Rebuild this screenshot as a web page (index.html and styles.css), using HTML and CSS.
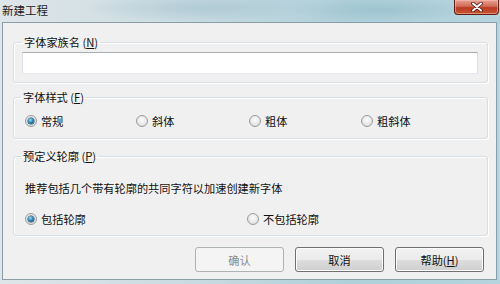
FILE: index.html
```html
<!DOCTYPE html>
<html lang="zh-CN">
<head>
<meta charset="utf-8">
<title>新建工程</title>
<link rel="stylesheet" href="styles.css">
</head>
<body>
<div class="window">
  <div class="titlebar">
    <span class="title">新建工程</span>
    <button class="close" aria-label="关闭">
      <svg width="12" height="10" viewBox="0 0 12 10">
        <path d="M2 1.5 L10 8.5 M10 1.5 L2 8.5" stroke="#4a1a14" stroke-width="3.6" stroke-linecap="round"/>
        <path d="M2 1.5 L10 8.5 M10 1.5 L2 8.5" stroke="#ffffff" stroke-width="2" stroke-linecap="round"/>
      </svg>
    </button>
  </div>
  <div class="client">
    <fieldset class="group g1">
      <legend>字体家族名 (<u>N</u>)</legend>
      <input class="textbox" type="text">
    </fieldset>
    <fieldset class="group g2">
      <legend>字体样式 (<u>F</u>)</legend>
      <div class="radios">
        <label class="opt"><span class="radio checked"></span>常规</label>
        <label class="opt"><span class="radio"></span>斜体</label>
        <label class="opt"><span class="radio"></span>粗体</label>
        <label class="opt"><span class="radio"></span>粗斜体</label>
      </div>
    </fieldset>
    <fieldset class="group g3">
      <legend>预定义轮廓 (<u>P</u>)</legend>
      <p class="desc">推荐包括几个带有轮廓的共同字符以加速创建新字体</p>
      <div class="radios">
        <label class="opt"><span class="radio checked"></span>包括轮廓</label>
        <span></span>
        <label class="opt"><span class="radio"></span>不包括轮廓</label>
      </div>
    </fieldset>
    <div class="buttons">
      <button class="btn" disabled>确认</button>
      <button class="btn">取消</button>
      <button class="btn">帮助(<u>H</u>)</button>
    </div>
  </div>
</div>
</body>
</html>
```
FILE: styles.css
```css
* { box-sizing: border-box; }
html, body {
  margin: 0;
  padding: 0;
  width: 500px;
  height: 284px;
  overflow: hidden;
}
body {
  font-family: "Noto Sans CJK SC", "Noto Sans", sans-serif;
  font-size: 11.2px;
  color: #111;
}
.window {
  width: 500px;
  height: 284px;
  display: flex;
  flex-direction: column;
  background:
    radial-gradient(ellipse 120px 14px at 200px 8px, rgba(150,185,200,0.45), transparent),
    radial-gradient(ellipse 90px 12px at 380px 10px, rgba(140,185,200,0.5), transparent),
    linear-gradient(90deg, #dfe6e9 0%, #cbdce2 35%, #afcfd9 70%, #b5d4de 100%);
}
.titlebar {
  height: 22px;
  flex: none;
  display: flex;
  align-items: flex-start;
  justify-content: space-between;
  padding-left: 2px;
  padding-right: 1px;
}
.title {
  font-size: 11.5px;
  line-height: 20px;
  color: #1b1b1b;
}
.close {
  width: 45px;
  height: 15px;
  margin: 0;
  padding: 0;
  border: 1px solid #5e1f17;
  border-top: none;
  border-radius: 0 0 4px 4px;
  background: linear-gradient(#e8a093 0%, #d26a55 45%, #b93a22 55%, #c9552f 100%);
  box-shadow: inset 0 0 0 1px rgba(255,200,190,0.5);
  display: flex;
  align-items: center;
  justify-content: center;
}
.close svg { display: block; }
.client {
  height: 258px;
  margin: 0 3px 0 2px;
  border: 1px solid #8a9ea8;
  background: #f0f0f0;
  display: flex;
  flex-direction: column;
  padding: 0 0 6px 0;
}
.group {
  margin: 0 8px 0 10px;
  padding: 0 11px 0 11px;
  border: 1px solid #d5dfe5;
  border-radius: 3px;
  box-shadow: inset 1px 1px 0 #fff, 1px 1px 0 #fff;
  min-width: 0;
}
.group legend {
  padding: 0 2px;
  margin-left: -4px;
  line-height: 16px;
  font-size: 11.2px;
}
.g1 { margin-top: 11px; padding-top: 2px; padding-bottom: 8px; padding-left: 8px; padding-right: 9px; }
.g2 { margin-top: 6px; padding-top: 8px; padding-bottom: 9px; }
.g3 { margin-top: 9px; padding-top: 16px; padding-bottom: 8px; }
.g1 legend { margin-left: 0; }
.textbox {
  display: block;
  width: 100%;
  height: 22px;
  margin: 0;
  border: 1px solid;
  border-color: #abadb3 #dbdfe6 #e3e9ef #e2e3ea;
  background: #fff;
  font: inherit;
  outline: none;
}
.radios {
  display: grid;
  grid-template-columns: 111px 113px 112px 1fr;
  height: 16px;
  align-items: center;
}
.g3 .radios { grid-template-columns: 111px 111px 1fr; }
.opt {
  display: flex;
  align-items: center;
  line-height: 16px;
  white-space: nowrap;
}
.radio {
  width: 12px;
  height: 12px;
  border-radius: 50%;
  border: 1px solid #9a9c9e;
  background: radial-gradient(circle at 50% 40%, #fdfdfd 0%, #e6e6e6 60%, #d2d2d2 100%);
  margin-right: 4px;
  position: relative;
  flex: none;
}
.radio.checked::after {
  content: "";
  position: absolute;
  left: 2px;
  top: 2px;
  width: 6px;
  height: 6px;
  border-radius: 50%;
  background: radial-gradient(circle at 40% 35%, #9fe3f7 0%, #2b86b8 45%, #0d3f66 100%);
  box-shadow: 0 0 0 0.5px #183c5a;
}
.desc {
  margin: 0 0 15px 0;
  line-height: 16px;
  white-space: nowrap;
}
.buttons {
  margin-top: 11px;
  display: flex;
  justify-content: flex-end;
  gap: 11px;
  padding-right: 12px;
}
.btn {
  width: 89px;
  height: 25px;
  margin: 0;
  padding: 0;
  font: inherit;
  color: #111;
  border: 1px solid #707070;
  border-radius: 3px;
  background: linear-gradient(#f2f2f2 0%, #ebebeb 50%, #dddddd 51%, #cfcfcf 100%);
  box-shadow: inset 0 0 0 1px #fcfcfc;
}
.btn:disabled {
  color: #8b8b8b;
  border-color: #adb2b5;
  background: #f4f4f4;
  box-shadow: none;
}
u { text-decoration: underline; text-underline-offset: 1px; }
```
